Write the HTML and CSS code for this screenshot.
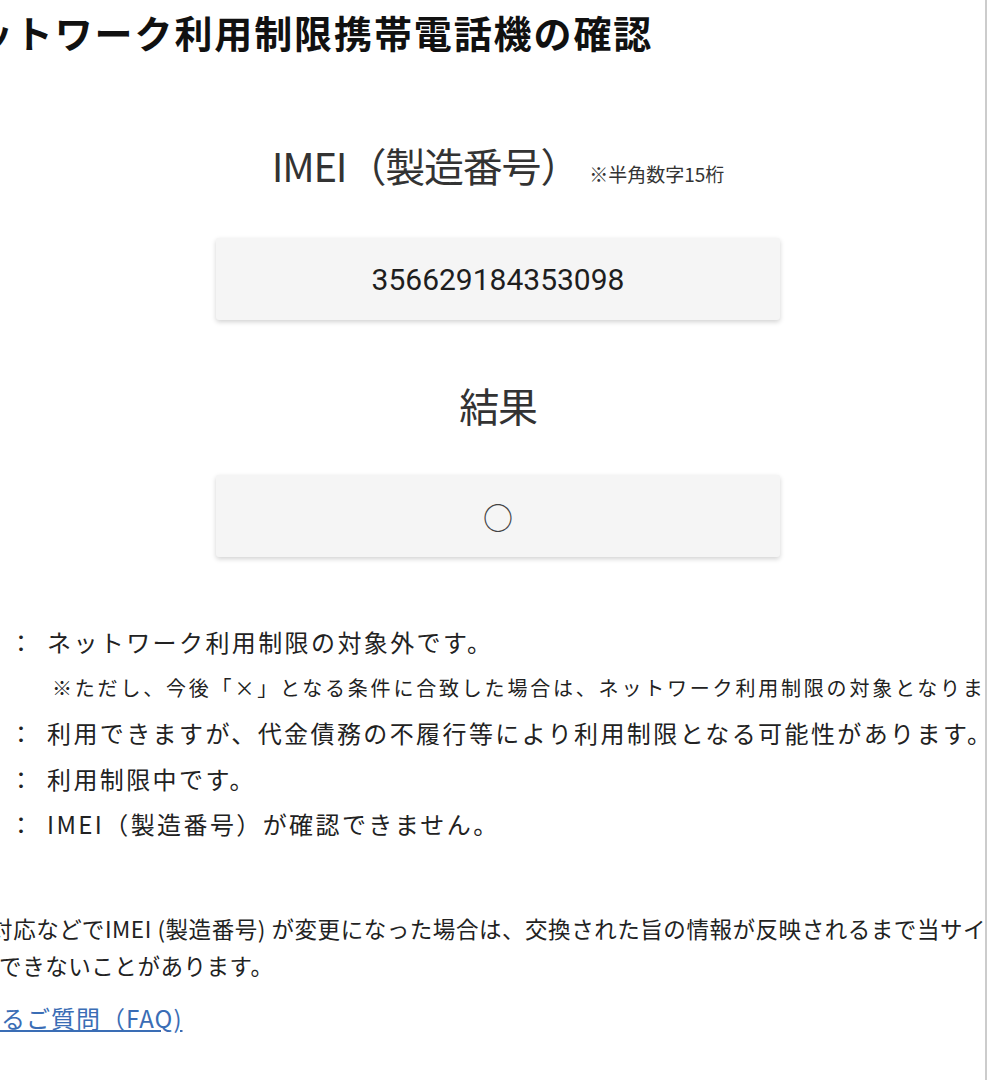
FILE: index.html
```html
<!DOCTYPE html>
<html lang="ja">
<head>
<meta charset="utf-8">
<title>ネットワーク利用制限携帯電話機の確認</title>
<link rel="stylesheet" href="styles.css">
</head>
<body>
<div class="frame">
  <div class="page">
    <h1 class="title">ネットワーク利用制限携帯電話機の確認</h1>

    <div class="label-row">
      <span class="label">IMEI（製造番号）</span><span class="hint">※半角数字15桁</span>
    </div>
    <div class="box field">356629184353098</div>

    <div class="label-row result-label">
      <span class="label">結果</span>
    </div>
    <div class="box result"><span class="circle">○</span></div>

    <ul class="legend">
      <li>
        <span class="mark">○</span><span class="colon">：</span>
        <div class="text">
          <div>ネットワーク利用制限の対象外です。</div>
          <div class="note">※ただし、今後「×」となる条件に合致した場合は、ネットワーク利用制限の対象となります。</div>
        </div>
      </li>
      <li>
        <span class="mark">△</span><span class="colon">：</span>
        <div class="text">利用できますが、代金債務の不履行等により利用制限となる可能性があります。</div>
      </li>
      <li>
        <span class="mark">×</span><span class="colon">：</span>
        <div class="text">利用制限中です。</div>
      </li>
      <li>
        <span class="mark">－</span><span class="colon">：</span>
        <div class="text">IMEI（製造番号）が確認できません。</div>
      </li>
    </ul>

    <p class="footnote">交換対応などでIMEI (製造番号) が変更になった場合は、交換された旨の情報が反映されるまで当サイトでは<br>確認できないことがあります。</p>
    <p class="faq"><a href="#">よくあるご質問（FAQ)</a></p>
  </div>
</div>
</body>
</html>
```

FILE: styles.css
```css
html, body {
  margin: 0;
  padding: 0;
  background: #fff;
}

body {
  width: 987px;
  height: 1080px;
  overflow: hidden;
  font-family: "Noto Sans CJK JP", "Noto Sans", sans-serif;
  color: #333;
}

.frame {
  width: 985px;
  height: 1080px;
  overflow: hidden;
  border-right: 2px solid #cccccc;
}

.page {
  margin-left: -100px;
  width: 1196px;
}

.title {
  margin: 0;
  padding-left: 35px;
  height: 64px;
  line-height: 64px;
  font-size: 38px;
  font-weight: 700;
  letter-spacing: 1.9px;
  color: #111;
  white-space: nowrap;
}

.label-row {
  margin-top: 71px;
  height: 60px;
  line-height: 60px;
  text-align: center;
  white-space: nowrap;
}

.label {
  font-size: 40px;
  font-weight: 400;
  letter-spacing: -1.2px;
  color: #333;
}

.hint {
  font-size: 19px;
  letter-spacing: 0;
  color: #333;
  margin-left: 10px;
}

.result-label {
  margin-top: 55px;
}

.box {
  box-sizing: border-box;
  width: 564px;
  height: 82px;
  margin-left: auto;
  margin-right: auto;
  background: #f5f5f5;
  border-radius: 3px;
  box-shadow: 0 2px 5px rgba(0, 0, 0, 0.18);
  display: flex;
  align-items: center;
  justify-content: center;
}

.field {
  margin-top: 43px;
  font-family: Roboto, "Noto Sans", sans-serif;
  font-size: 30px;
  color: #1e1e1e;
  letter-spacing: 0;
}

.result {
  margin-top: 40px;
}

.circle {
  font-size: 30px;
  line-height: 1;
  color: #444;
}

.legend {
  list-style: none;
  margin: 62px 0 0 0;
  padding: 0 0 0 53px;
  font-size: 24px;
  letter-spacing: 2.4px;
  color: #222;
}

.legend li {
  display: flex;
  align-items: flex-start;
  line-height: 45.5px;
  white-space: nowrap;
}

.mark {
  width: 56px;
  text-align: left;
}

.colon {
  width: 26px;
  text-align: center;
}

.text {
  margin-left: 12px;
}

.note {
  font-size: 20px;
  letter-spacing: 2.8px;
  margin-left: 5px;
}

.footnote {
  margin: 63px 0 0 0;
  padding-left: 53px;
  text-indent: -9px;
  font-size: 22.5px;
  line-height: 37px;
  letter-spacing: 0.55px;
  color: #222;
  white-space: nowrap;
}

.faq {
  margin: 15px 0 0 0;
  padding-left: 26px;
  font-size: 24px;
  line-height: 37px;
  letter-spacing: 1px;
  white-space: nowrap;
}

.faq a {
  color: #3a6db5;
  text-decoration: underline;
}
```
